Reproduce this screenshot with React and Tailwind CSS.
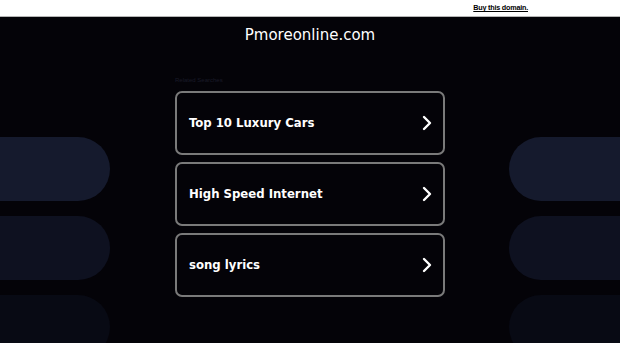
const LINKS = ["Top 10 Luxury Cars", "High Speed Internet", "song lyrics"];

const PILLS = ["bg-[#151a2d]", "bg-[#0e1120]", "bg-[#080a14]"];

function Chevron() {
  return (
    <svg width="10" height="16" viewBox="0 0 10 16" fill="none">
      <polyline points="2,2 8,8 2,14" stroke="white" strokeWidth="2.4" strokeLinecap="round" strokeLinejoin="round" />
    </svg>
  );
}

export default function App() {
  return (
    <div className="relative w-[620px] h-[343px] overflow-hidden bg-[#040308]" style={{ fontFamily: '"DejaVu Sans", sans-serif' }}>
      {/* background pills */}
      <div className="absolute left-0 top-[137px] flex flex-col gap-[15px]">
        {PILLS.map((c) => (
          <div key={c} className={`w-[110px] h-[64px] rounded-r-[32px] ${c}`} />
        ))}
      </div>
      <div className="absolute right-0 top-[137px] flex flex-col gap-[15px]">
        {PILLS.map((c) => (
          <div key={c} className={`w-[111px] h-[64px] rounded-l-[32px] ${c}`} />
        ))}
      </div>

      <div className="relative">
        <div className="h-[17px] bg-white border-b border-[#b5b5b5] flex justify-end pr-[92px]">
          <a
            className="text-[7.2px] font-bold text-black underline mt-[3px] tracking-[-0.2px]"
            style={{ fontFamily: '"Liberation Sans", Arial, sans-serif' }}
          >
            Buy this domain.
          </a>
        </div>

        <h1 className="text-center text-white text-[15px] leading-none mt-[11px] font-medium">Pmoreonline.com</h1>

        <div className="w-[270px] mx-auto mt-[34px]">
          <p className="text-[6px] text-[#1a1b28] leading-none mb-[8px]" style={{ fontFamily: '"Liberation Sans", Arial, sans-serif' }}>
            Related Searches
          </p>
          <div className="flex flex-col gap-[7px]">
            {LINKS.map((l) => (
              <div
                key={l}
                className="h-[64px] shrink-0 border-2 border-[#7a7a7a] rounded-[7px] flex items-center justify-between pl-[12px] pr-[11px] bg-[#040308]"
              >
                <span
                  className="text-white font-bold text-[13px]"
                  style={{ fontFamily: '"DejaVu Sans Condensed", "DejaVu Sans", sans-serif', fontStretch: "condensed" }}
                >
                  {l}
                </span>
                <Chevron />
              </div>
            ))}
          </div>
        </div>
      </div>
    </div>
  );
}
